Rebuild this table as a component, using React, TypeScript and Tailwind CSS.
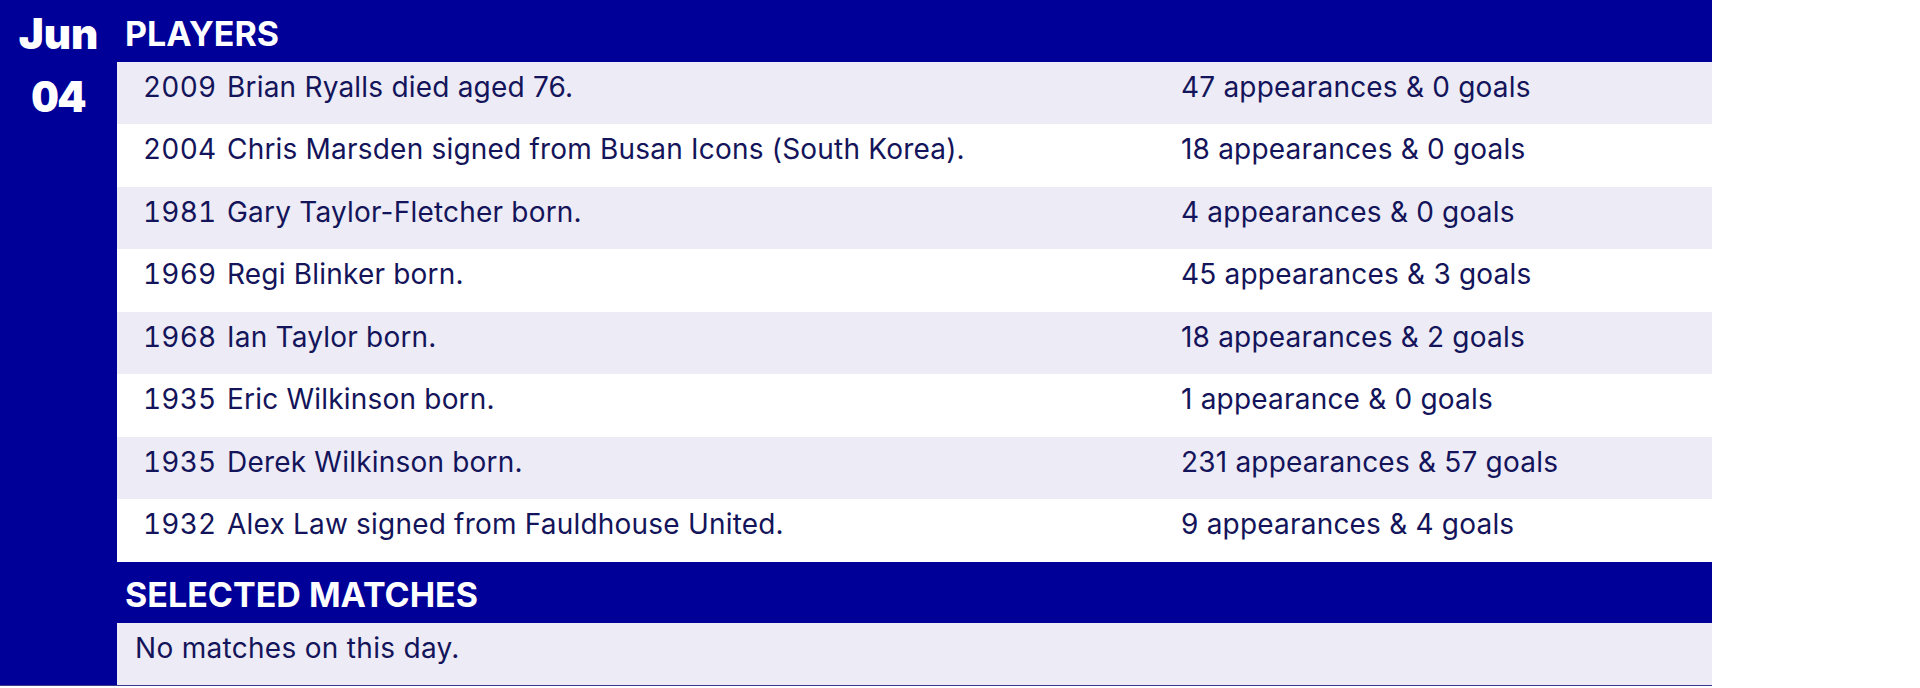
import React from "react";

const players: { year: string; text: string; stats: string }[] = [
  { year: "2009", text: "Brian Ryalls died aged 76.", stats: "47 appearances & 0 goals" },
  { year: "2004", text: "Chris Marsden signed from Busan Icons (South Korea).", stats: "18 appearances & 0 goals" },
  { year: "1981", text: "Gary Taylor-Fletcher born.", stats: "4 appearances & 0 goals" },
  { year: "1969", text: "Regi Blinker born.", stats: "45 appearances & 3 goals" },
  { year: "1968", text: "Ian Taylor born.", stats: "18 appearances & 2 goals" },
  { year: "1935", text: "Eric Wilkinson born.", stats: "1 appearance & 0 goals" },
  { year: "1935", text: "Derek Wilkinson born.", stats: "231 appearances & 57 goals" },
  { year: "1932", text: "Alex Law signed from Fauldhouse United.", stats: "9 appearances & 4 goals" },
];

export default function App() {
  return (
    <div className="w-[1920px] h-[688px] bg-white font-['Inter','Liberation_Sans',sans-serif]">
      <div className="flex w-[1712px] bg-[#000099] pt-px border-b border-[#3a3a8c]">
        <div className="w-[117px] shrink-0 flex flex-col items-center text-white font-black text-[42px] leading-none">
          <div className="mt-[12px]">Jun</div>
          <div className="mt-[21px] tabular-nums">04</div>
        </div>
        <div className="flex-1 flex flex-col">
          <div className="h-[61px] pl-[8px] pt-[16px] text-white font-bold text-[34px] leading-none">
            PLAYERS
          </div>
          {players.map((p, i) => (
            <div
              key={i}
              className={
                (i % 2 === 0 ? "bg-[#ecebf6] h-[62px]" : "bg-white h-[63px]") +
                " flex pl-[26px] pt-[11px] text-[28px] tracking-[0.2px] leading-none text-[#14145a]"
              }
            >
              <span className="w-[84px] shrink-0 tabular-nums">{p.year}</span>
              <span className="w-[954px] shrink-0">{p.text}</span>
              <span>{p.stats}</span>
            </div>
          ))}
          <div className="h-[61px] pl-[8px] pt-[16px] text-white font-bold text-[34px] leading-none">
            SELECTED MATCHES
          </div>
          <div className="h-[62px] bg-[#ecebf6] pl-[18px] pt-[11px] text-[28px] tracking-[0.3px] leading-none text-[#14145a]">
            No matches on this day.
          </div>
        </div>
      </div>
    </div>
  );
}
